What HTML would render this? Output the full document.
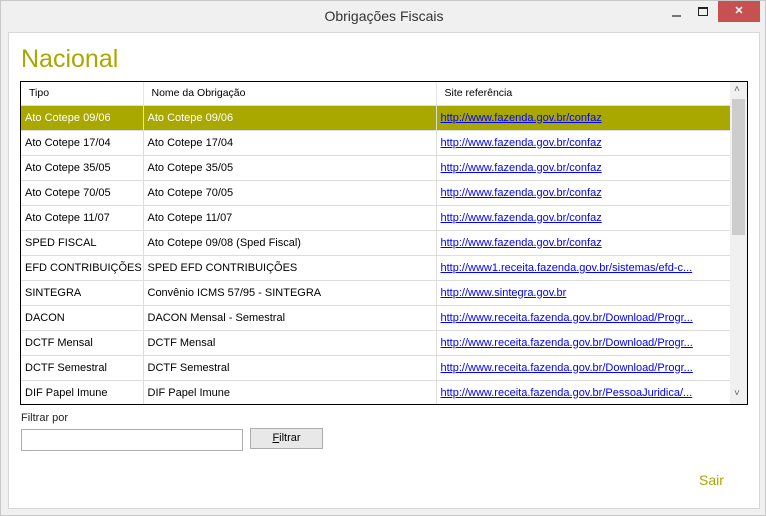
<!DOCTYPE html>
<html><head><meta charset="utf-8"><style>
*{margin:0;padding:0;box-sizing:border-box}
body{width:766px;height:516px;background:#f0f0f0;font-family:"Liberation Sans",sans-serif;position:relative;overflow:hidden;border:1px solid #c8c8c8}
.abs{position:absolute}
#title{left:0;top:7px;width:766px;text-align:center;font-size:14px;color:#333}
#client{left:7px;top:31px;width:752px;height:477px;background:#fff;border:1px solid #d8d8d8}
#close{left:717px;top:0;width:42px;height:21px;background:#c75050;color:#fff;font-size:11px;text-align:center;line-height:21px;font-weight:bold}
#nac{left:20px;top:44px;font-size:25px;color:#a8a800}
#grid{left:19px;top:80px;width:728px;height:324px;border:1px solid #000;background:#fff;overflow:hidden}
table{border-collapse:collapse;table-layout:fixed;width:709px;font-size:11px;position:absolute;left:0;top:0}
td{height:25px;border-right:1px solid #ddd;border-bottom:1px solid #ddd;padding-left:4px;white-space:nowrap;overflow:hidden;color:#000}
th{height:23px;font-weight:normal;text-align:left;font-size:10.5px;padding-left:8px;border-right:1px solid #e4e4e4;border-bottom:1px solid #ddd;overflow:hidden;white-space:nowrap}
a{color:#00f;text-decoration:underline}
tr.sel td{background:#a8a800;color:#fff}
tr.sel a{color:#00f}
#sb{left:709px;top:0;width:17px;height:322px;background:#f0f0f0}
#thumb{left:2px;top:17px;width:13px;height:136px;background:#cdcdcd}
</style></head><body>
<div class="abs" id="title">Obrigações Fiscais</div>
<div class="abs" style="left:671px;top:14px;width:9px;height:2px;background:#777"></div>
<div class="abs" style="left:697px;top:6px;width:10px;height:9px;border:1px solid #222;border-top-width:2px"></div>
<div class="abs" id="close">✕</div>
<div class="abs" id="client"></div>
<div class="abs" id="nac">Nacional</div>
<div class="abs" id="grid">
<table>
<colgroup><col style="width:122px"><col style="width:293px"><col style="width:294px"></colgroup>
<tr><th style="height:22px">Tipo</th><th>Nome da Obrigação</th><th>Site referência</th></tr>
<tr class="sel"><td>Ato Cotepe 09/06</td><td>Ato Cotepe 09/06</td><td><a>http://www.fazenda.gov.br/confaz</a></td></tr>
<tr><td>Ato Cotepe 17/04</td><td>Ato Cotepe 17/04</td><td><a>http://www.fazenda.gov.br/confaz</a></td></tr>
<tr><td>Ato Cotepe 35/05</td><td>Ato Cotepe 35/05</td><td><a>http://www.fazenda.gov.br/confaz</a></td></tr>
<tr><td>Ato Cotepe 70/05</td><td>Ato Cotepe 70/05</td><td><a>http://www.fazenda.gov.br/confaz</a></td></tr>
<tr><td>Ato Cotepe 11/07</td><td>Ato Cotepe 11/07</td><td><a>http://www.fazenda.gov.br/confaz</a></td></tr>
<tr><td>SPED FISCAL</td><td>Ato Cotepe 09/08 (Sped Fiscal)</td><td><a>http://www.fazenda.gov.br/confaz</a></td></tr>
<tr><td>EFD CONTRIBUIÇÕES</td><td>SPED EFD CONTRIBUIÇÕES</td><td><a>http://www1.receita.fazenda.gov.br/sistemas/efd-c...</a></td></tr>
<tr><td>SINTEGRA</td><td>Convênio ICMS 57/95 - SINTEGRA</td><td><a>http://www.sintegra.gov.br</a></td></tr>
<tr><td>DACON</td><td>DACON Mensal - Semestral</td><td><a>http://www.receita.fazenda.gov.br/Download/Progr...</a></td></tr>
<tr><td>DCTF Mensal</td><td>DCTF Mensal</td><td><a>http://www.receita.fazenda.gov.br/Download/Progr...</a></td></tr>
<tr><td>DCTF Semestral</td><td>DCTF Semestral</td><td><a>http://www.receita.fazenda.gov.br/Download/Progr...</a></td></tr>
<tr><td>DIF Papel Imune</td><td>DIF Papel Imune</td><td><a>http://www.receita.fazenda.gov.br/PessoaJuridica/...</a></td></tr>
</table>
<div class="abs" id="sb"><div class="abs" style="left:4px;top:2px;font-size:10px;color:#666">˄</div><div class="abs" id="thumb"></div><div class="abs" style="left:4px;top:306px;font-size:10px;color:#666">˅</div></div>
</div>
<div class="abs" style="left:20px;top:411px;font-size:11px;color:#222">Filtrar por</div>
<div class="abs" style="left:20px;top:428px;width:222px;height:22px;border:1px solid #abadb3;background:#fff"></div>
<div class="abs" style="left:249px;top:427px;width:73px;height:21px;border:1px solid #acacac;background:#e8e8e8;font-size:11px;text-align:center;line-height:19px"><u>F</u>iltrar</div>
<div class="abs" style="left:698px;top:471px;font-size:14px;color:#a8a800">Sair</div>
</body></html>
